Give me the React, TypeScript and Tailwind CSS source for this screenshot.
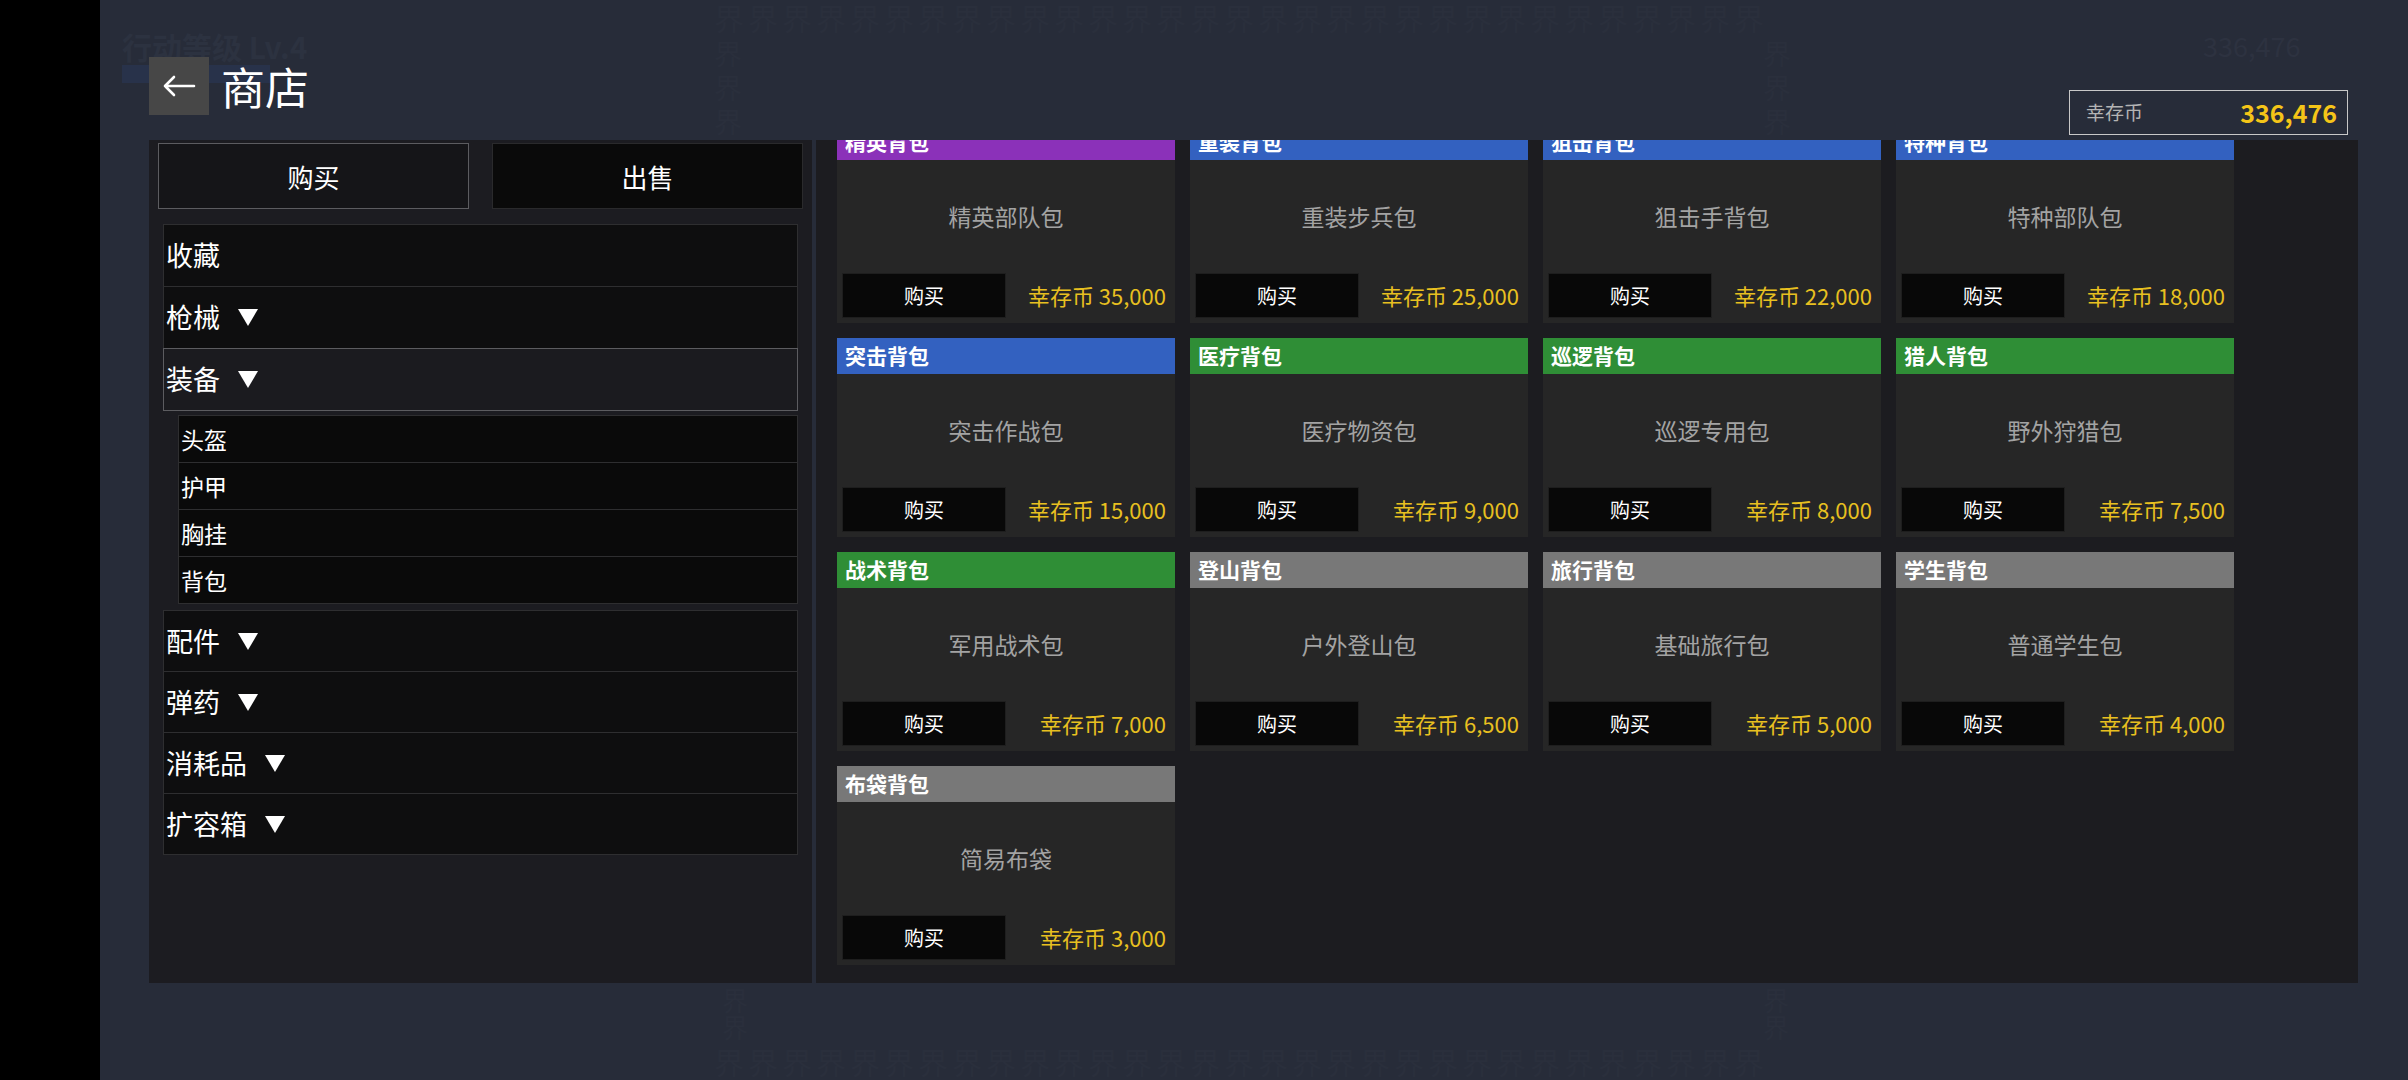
import React from "react";

type Bag = {
  tag: string;
  name: string;
  price: string;
  tone: "purple" | "blue" | "green" | "gray";
};

const TONES: Record<Bag["tone"], string> = {
  purple: "bg-[#8b31b9]",
  blue: "bg-[#3361c0]",
  green: "bg-[#2f8e36]",
  gray: "bg-[#787878]",
};

const BAGS: Bag[] = [
  { tag: "精英背包", name: "精英部队包", price: "35,000", tone: "purple" },
  { tag: "重装背包", name: "重装步兵包", price: "25,000", tone: "blue" },
  { tag: "狙击背包", name: "狙击手背包", price: "22,000", tone: "blue" },
  { tag: "特种背包", name: "特种部队包", price: "18,000", tone: "blue" },
  { tag: "突击背包", name: "突击作战包", price: "15,000", tone: "blue" },
  { tag: "医疗背包", name: "医疗物资包", price: "9,000", tone: "green" },
  { tag: "巡逻背包", name: "巡逻专用包", price: "8,000", tone: "green" },
  { tag: "猎人背包", name: "野外狩猎包", price: "7,500", tone: "green" },
  { tag: "战术背包", name: "军用战术包", price: "7,000", tone: "green" },
  { tag: "登山背包", name: "户外登山包", price: "6,500", tone: "gray" },
  { tag: "旅行背包", name: "基础旅行包", price: "5,000", tone: "gray" },
  { tag: "学生背包", name: "普通学生包", price: "4,000", tone: "gray" },
  { tag: "布袋背包", name: "简易布袋", price: "3,000", tone: "gray" },
];

const SUB_ITEMS = ["头盔", "护甲", "胸挂", "背包"];

function Caret() {
  return (
    <svg width="20" height="17" viewBox="0 0 20 17" className="ml-[18px] shrink-0">
      <polygon points="0,0 20,0 10,17" fill="#ffffff" />
    </svg>
  );
}

function CategoryRow({
  label,
  caret = true,
  active = false,
  first = false,
  tall = true,
}: {
  label: string;
  caret?: boolean;
  active?: boolean;
  first?: boolean;
  tall?: boolean;
}) {
  return (
    <div
      className={[
        "relative flex items-center border pl-[2px] text-[27px] text-white",
        tall ? "h-[63px]" : "h-[62px]",
        first ? "" : "-mt-px",
        active
          ? "z-10 border-[#5c5c60] bg-[#1b1b1f]"
          : "border-[#2e2e30] bg-[#0e0e0f]",
      ].join(" ")}
    >
      <span>{label}</span>
      {caret && <Caret />}
    </div>
  );
}

function BagCard({ bag }: { bag: Bag }) {
  return (
    <div className="flex h-[199px] flex-col">
      <div
        className={`flex h-[36px] items-center pl-[8px] text-[21px] font-bold text-white ${TONES[bag.tone]}`}
      >
        {bag.tag}
      </div>
      <div className="flex flex-1 flex-col bg-[#262626]">
        <div className="flex flex-1 items-center justify-center text-[23px] text-[#a3a3a3]">
          {bag.name}
        </div>
        <div className="flex items-center justify-between pb-[5px] pl-[5px] pr-[9px]">
          <button
            type="button"
            className="flex h-[45px] w-[164px] items-center justify-center border border-[#1e1e1e] bg-[#080808] text-[20px] text-white"
          >
            购买
          </button>
          <span className="text-[22px] text-[#e8c020]">幸存币 {bag.price}</span>
        </div>
      </div>
    </div>
  );
}

// faint leftovers of the game screen behind the shop overlay
function Ghost() {
  const row = "界".repeat(31);
  return (
    <div className="pointer-events-none absolute inset-0 select-none overflow-hidden text-[#2a2f3c]">
      <div className="absolute left-[22px] top-[24px] text-[30px] font-bold text-[#2c3240]">
        行动等级 Lv.4
      </div>
      <div className="absolute left-[22px] top-[65px] h-[18px] w-[148px] bg-[#28324a]" />
      <div className="absolute left-[2103px] top-[26px] text-[27px] text-[#2d3240]">336,476</div>
      <div className="absolute left-[614px] top-0 text-[30px] leading-[34px] tracking-[4px]">
        {row}
      </div>
      <div className="absolute left-[614px] top-[36px] flex flex-col text-[28px] leading-[34px]">
        <span>界</span>
        <span>界</span>
        <span>界</span>
      </div>
      <div className="absolute left-[1663px] top-[36px] flex flex-col text-[28px] leading-[34px]">
        <span>界</span>
        <span>界</span>
        <span>界</span>
      </div>
      <div className="absolute left-[622px] top-[986px] flex flex-col text-[26px] leading-[27px]">
        <span>界</span>
        <span>界</span>
      </div>
      <div className="absolute left-[1663px] top-[986px] flex flex-col text-[26px] leading-[27px]">
        <span>界</span>
        <span>界</span>
      </div>
      <div className="absolute left-[614px] top-[1044px] text-[30px] leading-[34px] tracking-[4px]">
        {row}
      </div>
    </div>
  );
}

export default function App() {
  return (
    <div
      className="flex h-[1080px] w-[2408px] overflow-hidden bg-black"
      style={{ fontFamily: '"Noto Sans CJK SC", "Noto Sans", sans-serif' }}
    >
      <div className="w-[100px] shrink-0 bg-black" />

      <div className="relative flex flex-1 flex-col bg-[#272c39]">
        <Ghost />

        <header className="relative flex h-[140px] items-start pl-[49px] pr-[60px]">
          <div className="mt-[57px] flex items-center">
            <button
              type="button"
              className="flex h-[58px] w-[60px] items-center justify-center bg-[#474747]"
              aria-label="返回"
            >
              <svg width="34" height="24" viewBox="0 0 34 24" fill="none">
                <path
                  d="M32 12H3M12 3L3 12L12 21"
                  stroke="#ffffff"
                  strokeWidth="2.6"
                  strokeLinecap="round"
                  strokeLinejoin="round"
                />
              </svg>
            </button>
            <h1 className="ml-[12px] text-[44px] leading-none text-white">商店</h1>
          </div>

          <div className="ml-auto mt-[90px] flex h-[45px] w-[279px] items-center justify-between border border-[#c8c8c8] pl-[16px] pr-[10px]">
            <span className="text-[19px] text-[#b4b4b4]">幸存币</span>
            <span className="text-[25px] font-bold text-[#f5c518]">336,476</span>
          </div>
        </header>

        <div className="relative ml-[49px] mr-[50px] flex h-[843px] gap-[4px]">
          {/* categories */}
          <aside className="flex w-[663px] shrink-0 flex-col bg-[#1c1c21] px-[9px] pt-[3px]">
            <div className="flex gap-[23px]">
              <button
                type="button"
                className="flex h-[66px] w-[311px] items-center justify-center border border-[#5c5c60] bg-[#151518] text-[26px] text-white"
              >
                购买
              </button>
              <button
                type="button"
                className="flex h-[66px] w-[311px] items-center justify-center border border-[#2a2a2c] bg-[#0a0a0a] text-[26px] text-white"
              >
                出售
              </button>
            </div>

            <div className="mx-[5px] mt-[15px] flex flex-col">
              <CategoryRow label="收藏" caret={false} first />
              <CategoryRow label="枪械" />
              <CategoryRow label="装备" active />

              <div className="ml-[15px] mt-[4px] flex flex-col">
                {SUB_ITEMS.map((item, i) => (
                  <div
                    key={item}
                    className={[
                      "flex h-[48px] items-center border border-[#2e2e30] bg-[#0a0a0a] pl-[2px] text-[23px] text-white",
                      i === 0 ? "" : "-mt-px",
                    ].join(" ")}
                  >
                    {item}
                  </div>
                ))}
              </div>

              <div className="mt-[6px] flex flex-col">
                <CategoryRow label="配件" first tall={false} />
                <CategoryRow label="弹药" tall={false} />
                <CategoryRow label="消耗品" tall={false} />
                <CategoryRow label="扩容箱" tall={false} />
              </div>
            </div>
          </aside>

          {/* goods, scrolled a little */}
          <section className="flex-1 overflow-hidden bg-[#1c1c20] pl-[21px]">
            <div className="-mt-[16px] grid grid-cols-[repeat(4,338px)] gap-[15px]">
              {BAGS.map((bag) => (
                <BagCard key={bag.tag} bag={bag} />
              ))}
            </div>
          </section>
        </div>
      </div>
    </div>
  );
}
